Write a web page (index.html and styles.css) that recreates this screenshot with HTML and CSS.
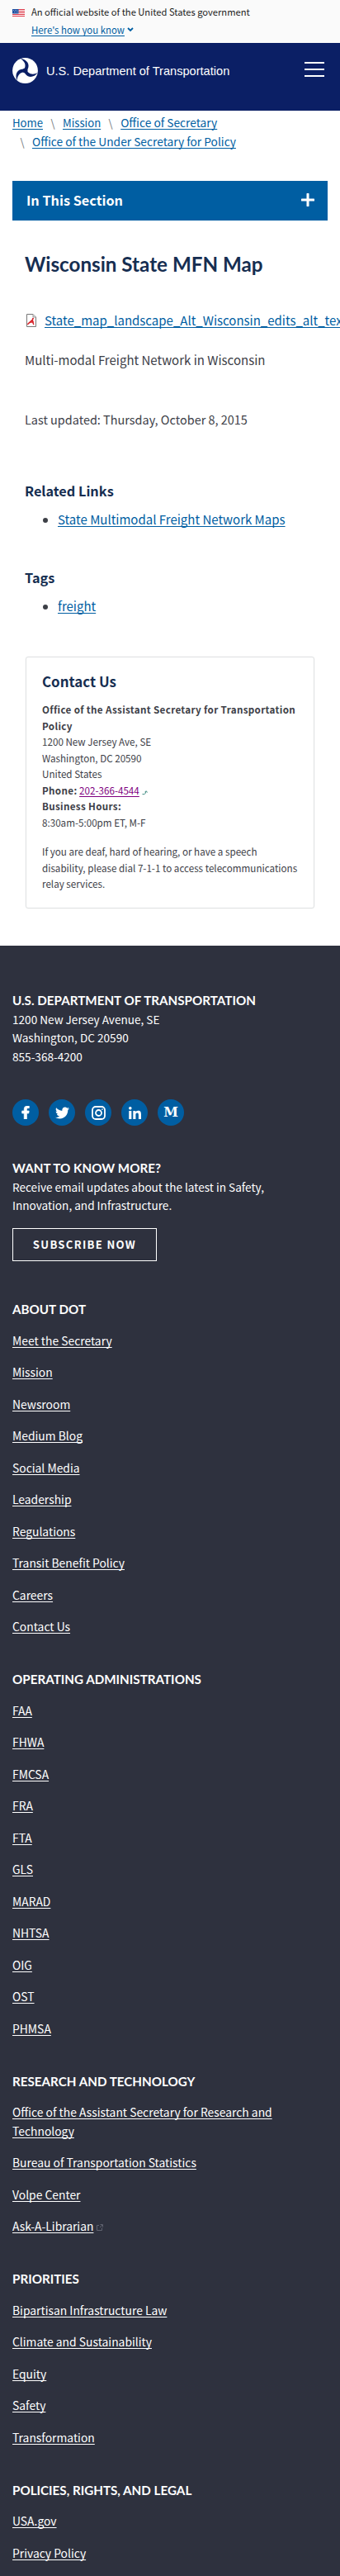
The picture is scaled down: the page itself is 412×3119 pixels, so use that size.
FILE: index.html
```
<!DOCTYPE html>
<html lang="en">
<head>
<meta charset="utf-8">
<title>Wisconsin State MFN Map | US Department of Transportation</title>
<link rel="stylesheet" href="styles.css">
</head>
<body>
<section class="banner">
  <svg class="flag" width="15" height="10" viewBox="0 0 15 10"><path fill="#fff" d="M0 0h15v10H0z"/><path stroke="#dc3545" stroke-width="1" d="M0 .5h15M0 2.5h15M0 4.5h15M0 6.5h15M0 8.5h15"/><path fill="#1e50a0" d="M0 0h7.5v5.5H0z"/><path stroke="#8fa9d4" stroke-dasharray="1 1" d="M1 1.5h6M2 3.5h5"/></svg>
  <div class="banner-text">
    <div class="official">An official website of the United States government</div>
    <div class="how"><a href="#">Here's how you know</a><svg width="8" height="6" viewBox="0 0 8 6"><path d="M1 1l3 3 3-3" fill="none" stroke="#005ea2" stroke-width="1.8"/></svg></div>
  </div>
</section>
<header class="header">
  <div class="brand">
    <svg width="31" height="31" viewBox="-15.5 -15.5 31 31"><circle r="15.4" fill="#fff"/><g fill="#0b1f65"><circle r="3"/><path id="arm" d="M-5.5 -14.6C2 -13.500 6.500 -8 2.800 -1L-2.600 1C.8 -4 2 -9.500 -5.500 -14.600z"/><use href="#arm" transform="rotate(120)"/><use href="#arm" transform="rotate(240)"/></g></svg>
    <span>U.S. Department of Transportation</span>
  </div>
  <div class="menu"><i></i><i></i><i></i></div>
</header>
<nav class="crumbs">
  <div><a class="short" href="#">Home</a><b>\</b><a class="short" href="#">Mission</a><b>\</b><a href="#">Office of Secretary</a></div>
  <div class="second"><b>\</b><a href="#">Office of the Under Secretary for Policy</a></div>
</nav>
<div class="section-bar"><span>In This Section</span><svg width="16" height="16" viewBox="0 0 16 16"><path d="M8 1v14M1 8h14" stroke="#fff" stroke-width="3" stroke-linecap="round"/></svg></div>
<main class="main">
  <h1>Wisconsin State MFN Map</h1>
  <div class="file">
    <svg width="12" height="16" viewBox="0 0 12 16"><path d="M.5.500h7.500l3.500 3.500v11.500H.5z" fill="#fff" stroke="#777"/><path d="M8 .5V4h3.500" fill="#ddd" stroke="#999"/><path d="M1.500 13c1-3 5-3 7-8M8 5c-1 3-1 5 1 8M2 12c2-2 4-2.500 7-2" fill="none" stroke="#d8232a" stroke-width="1.500"/></svg>
    <a href="#">State_map_landscape_Alt_Wisconsin_edits_alt_text.pdf</a>
  </div>
  <p class="desc">Multi-modal Freight Network in Wisconsin</p>
  <p class="updated">Last updated: Thursday, October 8, 2015</p>
  <h2>Related Links</h2>
  <ul><li><a href="#">State Multimodal Freight Network Maps</a></li></ul>
  <h2 class="tags">Tags</h2>
  <ul><li><a href="#">freight</a></li></ul>
  <aside class="card">
    <h3>Contact Us</h3>
    <p><strong>Office of the Assistant Secretary for Transportation Policy</strong><br>1200 New Jersey Ave, SE<br>Washington, DC 20590<br>United States<br><strong>Phone:</strong> <a class="tel" href="#">202-366-4544</a><svg width="7" height="6" viewBox="0 0 7 6"><path d="M.5 4.500q3.500 1.200 4.500-3M3.500 2L5.300.8 6.500 2.500" fill="none" stroke="#3d8a80"/></svg><br><strong>Business Hours:</strong><br>8:30am-5:00pm ET, M-F</p>
    <p>If you are deaf, hard of hearing, or have a speech disability, please dial 7-1-1 to access telecommunications relay services.</p>
  </aside>
</main>
<footer class="footer">
  <h4>U.S. DEPARTMENT OF TRANSPORTATION</h4>
  <p>1200 New Jersey Avenue, SE<br>Washington, DC 20590<br>855-368-4200</p>
  <div class="social">
    <span><svg width="10" height="16" viewBox="0 0 320 512"><path fill="#fff" stroke="#fff" stroke-width="24" d="M279.140 288l14.220-92.660h-88.910v-60.130c0-25.350 12.420-50.060 52.240-50.060h40.420V6.260S260.430 0 225.360 0c-73.220 0-121.080 44.380-121.080 124.720v70.620H22.890V288h81.390v224h100.170V288z"/></svg></span>
    <span><svg width="17" height="17" viewBox="0 0 512 512"><path fill="#fff" d="M459.370 151.716c.325 4.548.325 9.097.325 13.645 0 138.720-105.583 298.558-298.558 298.558-59.452 0-114.680-17.219-161.137-47.106 8.447.974 16.568 1.299 25.340 1.299 49.055 0 94.213-16.568 130.274-44.832-46.132-.975-84.792-31.188-98.112-72.772 6.498.974 12.995 1.624 19.818 1.624 9.421 0 18.843-1.300 27.614-3.573-48.081-9.747-84.143-51.980-84.143-102.985v-1.299c13.969 7.797 30.214 12.670 47.431 13.319-28.264-18.843-46.781-51.005-46.781-87.391 0-19.492 5.197-37.360 14.294-52.954 51.655 63.675 129.300 105.258 216.365 109.807-1.624-7.797-2.599-15.918-2.599-24.040 0-57.828 46.782-104.934 104.934-104.934 30.213 0 57.502 12.670 76.670 33.137 23.715-4.548 46.456-13.320 66.599-25.340-7.798 24.366-24.366 44.833-46.132 57.827 21.117-2.273 41.584-8.122 60.426-16.243-14.292 20.791-32.161 39.308-52.628 54.253z"/></svg></span>
    <span><svg width="17" height="17" viewBox="0 0 17 17" fill="none" stroke="#fff" stroke-width="1.800"><rect x="1" y="1" width="15" height="15" rx="4"/><circle cx="8.500" cy="8.500" r="3.500"/><path d="M12.200 4.200h1.400" stroke-width="1.400"/></svg></span>
    <span><svg width="15" height="15" viewBox="0 0 448 448"><path fill="#fff" d="M100.280 448H7.400V148.900h92.880zM53.790 108.100C24.090 108.100 0 83.500 0 53.800a53.790 53.790 0 0 1 107.580 0c0 29.700-24.100 54.300-53.790 54.300zM447.900 448h-92.680V302.400c0-34.700-.7-79.200-48.290-79.200-48.290 0-55.690 37.700-55.690 76.700V448h-92.780V148.900h89.080v40.800h1.300c12.400-23.500 42.690-48.300 87.880-48.300 94 0 111.280 61.900 111.280 142.300V448z"/></svg></span>
    <span class="medium">M</span>
  </div>
  <h4>WANT TO KNOW MORE?</h4>
  <p>Receive email updates about the latest in Safety,<br>Innovation, and Infrastructure.</p>
  <a class="subscribe" href="#">SUBSCRIBE NOW</a>
  <section><h4>ABOUT DOT</h4>
    <a href="#">Meet the Secretary</a><a href="#">Mission</a><a href="#">Newsroom</a><a href="#">Medium Blog</a><a href="#">Social Media</a><a href="#">Leadership</a><a href="#">Regulations</a><a href="#">Transit Benefit Policy</a><a href="#">Careers</a><a href="#">Contact Us</a></section>
  <section><h4>OPERATING ADMINISTRATIONS</h4>
    <a href="#">FAA</a><a href="#">FHWA</a><a href="#">FMCSA</a><a href="#">FRA</a><a href="#">FTA</a><a href="#">GLS</a><a href="#">MARAD</a><a href="#">NHTSA</a><a href="#">OIG</a><a href="#">OST</a><a href="#">PHMSA</a></section>
  <section><h4>RESEARCH AND TECHNOLOGY</h4>
    <a href="#">Office of the Assistant Secretary for Research and<br>Technology</a><a href="#">Bureau of Transportation Statistics</a><a href="#">Volpe Center</a>
    <div class="ext"><a href="#">Ask-A-Librarian</a><svg width="8" height="8" viewBox="0 0 8 8"><path d="M3 1.500H.5v6h6V4.500M4 4l3-3M4.500.5h3v3" fill="none" stroke="#5f626f"/></svg></div></section>
  <section><h4>PRIORITIES</h4>
    <a href="#">Bipartisan Infrastructure Law</a><a href="#">Climate and Sustainability</a><a href="#">Equity</a><a href="#">Safety</a><a href="#">Transformation</a></section>
  <section><h4>POLICIES, RIGHTS, AND LEGAL</h4>
    <a href="#">USA.gov</a><a href="#">Privacy Policy</a></section>
</footer>
</body>
</html>
```
FILE: styles.css
```
* { box-sizing: border-box; }
html, body { margin: 0; padding: 0; }
body { width: 412px; height: 3119px; overflow: hidden; background: #fff; color: #3d4047; font-family: "Noto Sans CJK SC", sans-serif; }
h1, h2, h3, h4, p, ul { margin: 0; padding: 0; }
a { color: #005ea2; text-decoration: underline; text-decoration-thickness: 1px; text-underline-offset: 2px; text-decoration-skip-ink: none; }
svg { flex: none; }

.banner { display: flex; height: 52px; padding: 3px 15px 0; background: #fafafa; gap: 8px; }
.flag { margin-top: 8px; }
.banner-text { font-size: 11.17px; line-height: 22px; color: #1b1b1b; }
.how { font-size: 11.4px; display: flex; align-items: center; gap: 3px; }

.header { display: flex; justify-content: space-between; height: 82px; padding: 18px 19px 0 15px; background: #0b1f65; }
.brand { display: flex; height: 31px; align-items: center; gap: 10px; color: #fff; font: 14.6px/30px "Liberation Sans", sans-serif; }
.menu { display: flex; flex-direction: column; gap: 6px; width: 24px; padding-top: 5px; }
.menu i { height: 2px; background: #fff; }

.crumbs { height: 85px; padding: 3px 15px 0; font-size: 13.75px; line-height: 23px; color: #71767a; }
.crumbs div { display: flex; }
.crumbs b { width: 24px; font-weight: 400; text-align: center; font-size: 13px; }
.crumbs .short { font-size: 13.15px; }

.section-bar { display: flex; justify-content: space-between; align-items: center; height: 48px; margin: 0 15px; padding: 0 16px 3px 17px; background: #005ea2; color: #fff; font-size: 16.25px; font-weight: 700; line-height: 24px; }

.main { height: 878px; padding: 38px 31px 0 30px; font-size: 15px; line-height: 24px; overflow: hidden; }
h1 { font: 700 24.2px/30px Lato, sans-serif; color: #162e51; }
.file { display: flex; gap: 10px; margin-top: 41px; height: 24px; white-space: nowrap; padding-left: 2px; }
.file svg { margin-top: 4px; }
.desc { margin-top: 24px; }
.updated { margin-top: 48px; font-size: 14.45px; }
h2 { margin-top: 62px; font-size: 16.3px; line-height: 24px; color: #162e51; }
h2.tags { margin-top: 46px; }
ul { margin-top: 11px; padding-left: 40px; }
.card { height: 305px; margin: 49px 0 0 1px; padding: 17px 19px 0; width: 350px; border: 1px solid #dfe1e2; border-radius: 3px; box-shadow: 0 0 1px #dfe1e2; font-size: 11.65px; line-height: 19.5px; }
.card h3 { margin-bottom: 12px; font-size: 16.95px; line-height: 24px; color: #162e51; }
.card p + p { margin-top: 16px; }
.card strong { letter-spacing: .33px; }
.card .tel { color: #800080; }
.card svg { margin-left: 3px; vertical-align: -1px; }

.footer { height: 1974px; padding: 55px 15px 0; background: #2e313e; color: #fff; font-size: 13.6px; line-height: 22.5px; }
.footer h4 { font: 700 15.2px/22.5px Lato, sans-serif; }
.footer a { color: #fff; }
.social { display: flex; gap: 12px; margin: 41px 0 40px; }
.social span { display: flex; align-items: center; justify-content: center; width: 32px; height: 32px; border-radius: 50%; background: #005ea2; }
.social .medium { font: 700 16px/32px "DejaVu Serif", serif; }
.footer .subscribe { display: block; width: 175px; height: 40px; margin: 16px 0 6px; border: 1px solid #fff; text-align: center; text-decoration: none; font-weight: 700; font-size: 13.1px; line-height: 37px; letter-spacing: 1.3px; }
.footer section { display: flex; flex-direction: column; align-items: flex-start; gap: 16px; padding-top: 41.5px; font-size: 13.87px; }
.footer section h4 { margin-bottom: -1px; }
.ext { display: flex; align-items: center; gap: 4px; }
.ext svg { margin-top: 4px; }
```
